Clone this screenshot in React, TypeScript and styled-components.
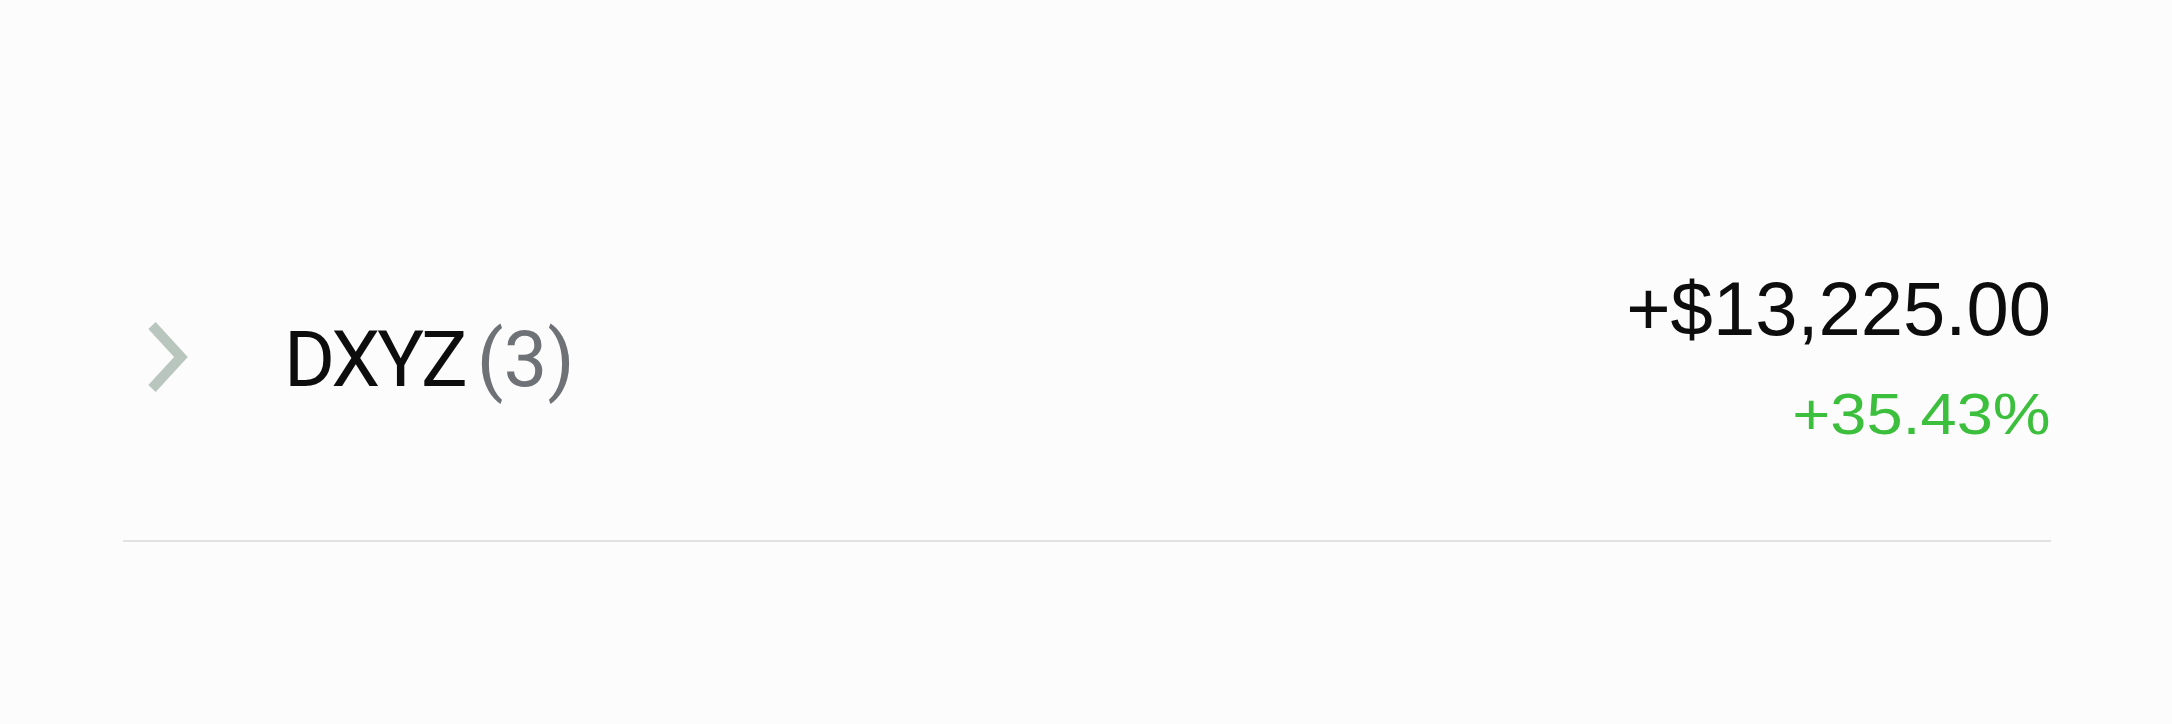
import React from 'react';
import styled, { createGlobalStyle } from 'styled-components';

const GlobalStyle = createGlobalStyle`
  html, body {
    margin: 0;
    padding: 0;
    background: #fcfcfc;
  }
  body {
    font-family: "Liberation Sans", Arial, sans-serif;
  }
`;

const StyledPage = styled.main`
  width: 2172px;
  height: 724px;
  box-sizing: border-box;
  padding: 0 121px 0 123px;
`;

const StyledRow = styled.section`
  display: flex;
  align-items: center;
  justify-content: space-between;
  height: 542px;
  padding-top: 174px;
  box-sizing: border-box;
  border-bottom: 2px solid #e2e2e2;
`;

const StyledRowHead = styled.div`
  display: flex;
  align-items: center;
  gap: 96px;
  padding-left: 25px;
`;

const StyledChevron = styled.svg`
  width: 40px;
  height: 70px;
  display: block;
`;

const StyledTicker = styled.h2`
  margin: 6px 0 0;
  font-family: Roboto, "Liberation Sans", sans-serif;
  font-size: 78px;
  font-weight: 400;
  line-height: 1;
  color: #0d0d0d;
  white-space: nowrap;
`;

const StyledSymbol = styled.span`
  letter-spacing: -3px;
`;

const StyledCount = styled.span`
  color: #6e7276;
  margin-left: 12px;
`;

const StyledTotals = styled.div`
  display: flex;
  flex-direction: column;
  align-items: flex-end;
  gap: 38px;
`;

const StyledValue = styled.span<{ $positive?: boolean; $size: number; $stretch: number }>`
  display: block;
  font-size: ${(p) => p.$size}px;
  line-height: 1;
  color: ${(p) => (p.$positive ? '#3cbf3c' : '#0d0d0d')};
  transform: scaleX(${(p) => p.$stretch});
  transform-origin: right center;
`;

interface Holding {
  ticker: string;
  count: number;
  change: string;
  percent: string;
}

const holding: Holding = {
  ticker: 'DXYZ',
  count: 3,
  change: '+$13,225.00',
  percent: '+35.43%',
};

const App = () => {
  return (
    <>
      <GlobalStyle />
      <StyledPage>
        <StyledRow>
          <StyledRowHead>
            <StyledChevron viewBox="0 0 40 70">
              <path d="M4 3.5 L33 35 L4 66.5" fill="none" stroke="#b9c6bd" strokeWidth="10" />
            </StyledChevron>
            <StyledTicker>
              <StyledSymbol>{holding.ticker}</StyledSymbol>
              <StyledCount>({holding.count})</StyledCount>
            </StyledTicker>
          </StyledRowHead>
          <StyledTotals>
            <StyledValue $size={76} $stretch={1}>{holding.change}</StyledValue>
            <StyledValue $positive $size={58} $stretch={1.12}>{holding.percent}</StyledValue>
          </StyledTotals>
        </StyledRow>
      </StyledPage>
    </>
  );
};

export default App;
